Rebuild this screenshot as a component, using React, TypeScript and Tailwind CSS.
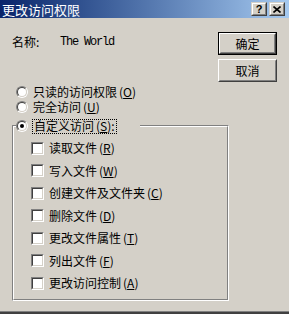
import React from 'react';

const font = { fontFamily: '"Noto Sans CJK SC", "Liberation Sans", sans-serif' };

const Key = ({ k }: { k: string }) => (
  <span className="ml-[2px]">
    (<u>{k}</u>)
  </span>
);

const Radio = ({ checked }: { checked?: boolean }) => (
  <span className="w-[12px] h-[12px] rounded-full border border-t-[#808080] border-l-[#808080] border-b-white border-r-white flex shrink-0">
    <span className="flex-1 rounded-full border border-t-[#404040] border-l-[#404040] border-b-[#d4d0c8] border-r-[#d4d0c8] bg-white flex items-center justify-center">
      {checked && <span className="w-[4px] h-[4px] rounded-full bg-black" />}
    </span>
  </span>
);

const Check = () => (
  <span className="w-[13px] h-[13px] border border-t-[#808080] border-l-[#808080] border-b-white border-r-white flex shrink-0">
    <span className="flex-1 border border-t-[#404040] border-l-[#404040] border-b-[#d4d0c8] border-r-[#d4d0c8] bg-white" />
  </span>
);

const Button = ({ label, isDefault }: { label: string; isDefault?: boolean }) => (
  <div className={`w-[59px] h-[23px] flex ${isDefault ? 'border border-black' : ''}`}>
    <div className="flex-1 flex border border-t-white border-l-white border-b-[#404040] border-r-[#404040]">
      <div className="flex-1 flex items-center justify-center border border-t-[#d4d0c8] border-l-[#d4d0c8] border-b-[#808080] border-r-[#808080] text-[12px] leading-none text-black">
        {label}
      </div>
    </div>
  </div>
);

const CaptionButton = ({ children }: { children: React.ReactNode }) => (
  <div className="w-[16px] h-[14px] flex bg-[#d4d0c8] border border-t-[#d4d0c8] border-l-[#d4d0c8] border-b-[#404040] border-r-[#404040]">
    <div className="flex-1 flex items-center justify-center border border-t-white border-l-white border-b-[#808080] border-r-[#808080]">
      {children}
    </div>
  </div>
);

const options = [
  { label: '读取文件', key: 'R' },
  { label: '写入文件', key: 'W' },
  { label: '创建文件及文件夹', key: 'C' },
  { label: '删除文件', key: 'D' },
  { label: '更改文件属性', key: 'T' },
  { label: '列出文件', key: 'F' },
  { label: '更改访问控制', key: 'A' },
];

export default function App() {
  return (
    <div className="w-[289px] h-[314px] bg-[#d4d0c8] flex flex-col overflow-hidden text-black" style={font}>
      {/* title bar */}
      <div className="h-[18px] shrink-0 flex items-center pl-[2px] pr-[4px] bg-gradient-to-r from-[#0a246a] to-[#a6caf0]">
        <span className="text-white text-[13px] leading-none">更改访问权限</span>
        <div className="ml-auto flex gap-[2px]">
          <CaptionButton>
            <span className="text-[11px] leading-none font-bold" style={{ fontFamily: '"Liberation Sans", sans-serif' }}>?</span>
          </CaptionButton>
          <CaptionButton>
            <svg width="8" height="7" viewBox="0 0 8 7">
              <path d="M0.5 0.5L7.5 6.5M7.5 0.5L0.5 6.5" stroke="black" strokeWidth="1.6" />
            </svg>
          </CaptionButton>
        </div>
      </div>

      {/* top row */}
      <div className="h-[64px] shrink-0 flex justify-between">
        <div className="pl-[12px] pt-[16px] flex items-center h-[32px] text-[12px] leading-none">
          <span className="w-[48px]">名称:</span>
          <span className="text-[12px] tracking-[-1.2px]" style={{ fontFamily: '"Liberation Mono", monospace' }}>
            The World
          </span>
        </div>
        <div className="flex flex-col gap-[4px] pt-[14px] pr-[12px]">
          <Button label="确定" isDefault />
          <Button label="取消" />
        </div>
      </div>

      {/* radios */}
      <div className="flex flex-col pt-[2px] text-[12px] leading-[12px]">
        <div className="h-[15px] flex items-center pl-[16px] gap-[5px]">
          <Radio />
          <span>只读的访问权限<Key k="O" /></span>
        </div>
        <div className="h-[15px] flex items-center pl-[16px] gap-[5px]">
          <Radio />
          <span>完全访问<Key k="U" /></span>
        </div>
      </div>

      {/* group box */}
      <div className="mt-[11px] ml-[12px] w-[217px] h-[176px] flex border border-t-[#808080] border-l-[#808080] border-b-white border-r-white">
        <div className="flex-1 flex flex-col border border-t-white border-l-white border-b-[#808080] border-r-[#808080] text-[12px] leading-none">
          <div className="-mt-[9px] ml-[2px] w-[124px] h-[16px] bg-[#d4d0c8] flex items-center gap-[4px]">
            <Radio checked />
            <span className="h-[15px] px-[1px] flex items-center border border-dotted border-black">
              自定义访问<Key k="S" />:
            </span>
          </div>
          <div className="flex flex-col gap-[6.5px] pt-[6px]">
            {options.map((o) => (
              <div key={o.key} className="h-[16px] flex items-center pl-[17px] gap-[5px]">
                <Check />
                <span>
                  {o.label}
                  <Key k={o.key} />
                </span>
              </div>
            ))}
          </div>
        </div>
      </div>

      <div className="mt-auto h-[1px] bg-[#808080]" />
      <div className="h-[2px] bg-[#404040]" />
    </div>
  );
}
